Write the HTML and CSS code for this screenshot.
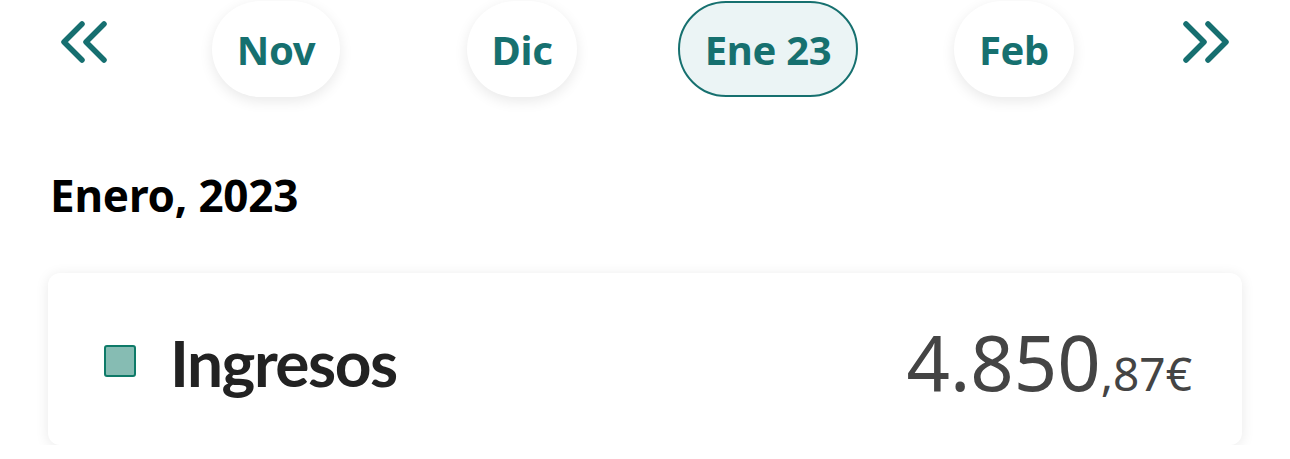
FILE: index.html
```html
<!DOCTYPE html>
<html lang="es">
<head>
<meta charset="utf-8">
<link rel="stylesheet" href="styles.css">
</head>
<body>
<nav class="months">
  <div class="chev chev-left">
    <svg width="48" height="42" viewBox="0 0 48 42"><path d="M22 3 L4 21 L22 39 M44 3 L26 21 L44 39" fill="none" stroke="#166f70" stroke-width="5.5" stroke-linecap="round" stroke-linejoin="round"/></svg>
  </div>
  <div class="cell"><span class="pill">Nov</span></div>
  <div class="cell"><span class="pill">Dic</span></div>
  <div class="cell"><span class="pill active">Ene 23</span></div>
  <div class="cell"><span class="pill">Feb</span></div>
  <div class="chev chev-right">
    <svg width="48" height="42" viewBox="0 0 48 42"><path d="M4 3 L22 21 L4 39 M26 3 L44 21 L26 39" fill="none" stroke="#166f70" stroke-width="5.5" stroke-linecap="round" stroke-linejoin="round"/></svg>
  </div>
</nav>
<h2 class="title">Enero, 2023</h2>
<section class="card">
  <div class="label">
    <span class="swatch"></span>
    <span class="name">Ingresos</span>
  </div>
  <div class="amount"><span class="int">4.850</span><span class="dec">,87€</span></div>
</section>
</body>
</html>
```
FILE: styles.css
```css
html, body {
  margin: 0;
  padding: 0;
  background: #ffffff;
  font-family: "Noto Sans", "Open Sans", sans-serif;
}
.months {
  display: grid;
  grid-template-columns: 153px repeat(4, 246px) 1fr;
  align-items: center;
  height: 97px;
  padding-top: 1px;
  box-sizing: border-box;
}
.chev {
  display: flex;
  align-items: center;
  height: 96px;
}
.chev svg { display: block; margin-top: -14px; }
.chev-left { padding-left: 60px; }
.chev-right { padding-left: 45px; }
.cell {
  display: flex;
  justify-content: center;
}
.pill {
  display: flex;
  align-items: center;
  justify-content: center;
  height: 96px;
  box-sizing: border-box;
  padding: 0 25px;
  border-radius: 48px;
  background: #ffffff;
  box-shadow: 0 4px 14px rgba(0, 0, 0, 0.09);
  color: #16706f;
  font-weight: 700;
  font-size: 40px;
  letter-spacing: -0.3px;
}
.pill.active {
  background: #ebf4f5;
  border: 2.5px solid #16706f;
  box-shadow: none;
  padding: 0 25px;
}
.title {
  margin: 68px 0 0 50px;
  font-size: 44px;
  font-weight: 700;
  color: #000000;
  line-height: 60px;
  letter-spacing: -0.2px;
}
.card {
  margin: 48px 48px 0 48px;
  height: 172px;
  border-radius: 12px;
  background: #ffffff;
  box-shadow: 0 2px 14px rgba(0, 0, 0, 0.09);
  display: flex;
  align-items: center;
  justify-content: space-between;
  padding: 0 50px 0 56px;
}
.label {
  display: flex;
  align-items: center;
  gap: 34px;
}
.swatch {
  width: 32px;
  height: 32px;
  box-sizing: border-box;
  background: #86bcb3;
  border: 2px solid #0e7a68;
  border-radius: 3px;
  margin-top: 4px;
}
.name {
  font-family: "Lato", "Noto Sans", sans-serif;
  font-size: 64px;
  font-weight: 700;
  color: #222222;
  letter-spacing: -1.5px;
  margin-top: 6px;
}
.amount {
  color: #444444;
  white-space: nowrap;
  margin-top: 4px;
}
.int {
  font-size: 76px;
  font-weight: 400;
}
.dec {
  font-size: 46px;
  font-weight: 400;
}
```
